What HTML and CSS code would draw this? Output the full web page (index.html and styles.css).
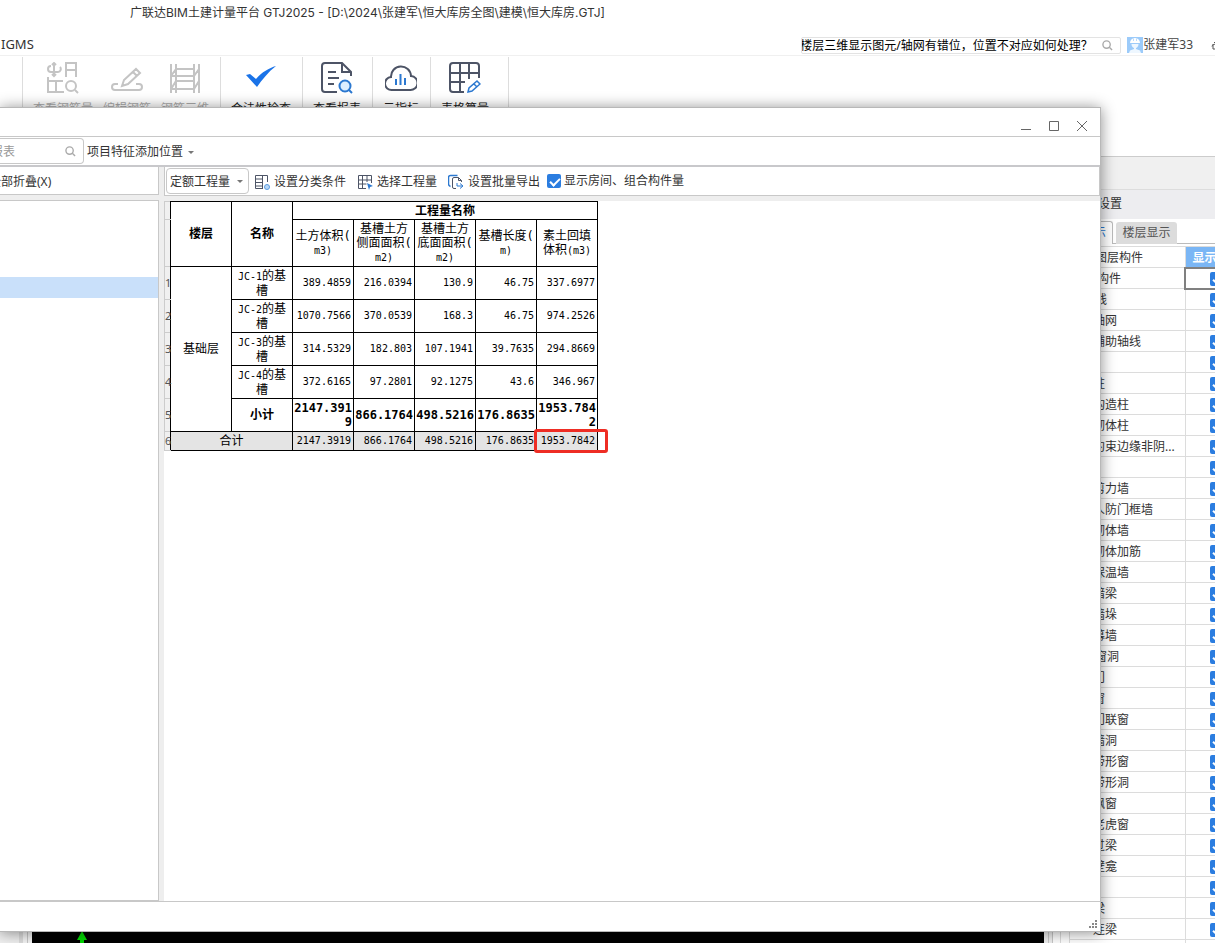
FILE: index.html
```html
<!DOCTYPE html>
<html lang="zh-CN">
<head>
<meta charset="utf-8">
<title>广联达BIM土建计量平台 GTJ2025</title>
<link rel="stylesheet" href="styles.css">
</head>
<body>
<div class="app">
  <header class="titlebar">广联达BIM土建计量平台 GTJ2025 - [D:\2024\张建军\恒大库房全图\建模\恒大库房.GTJ]</header>
  <nav class="menubar">
    <a class="menu-link" href="#">IGMS</a>
    <div class="help-search">
      <input class="help-input" type="text" aria-label="帮助搜索" value="楼层三维显示图元/轴网有错位，位置不对应如何处理？">
      <svg class="glass" viewBox="0 0 12 12"><circle cx="5" cy="5" r="4"/><path d="M8 8l3 3"/></svg>
    </div>
    <button class="user" type="button">
      <svg class="avatar" viewBox="0 0 16 16"><rect width="16" height="16" fill="#9ccbfa"/><path d="M3 6a5 5 0 0 1 10 0z" fill="#fff"/><path d="M4.500 7h7c0 2-1 3.500-2.500 4v1l4 1.500 1 2.500H2l1-2.500 4-1.500v-1C5.500 10.500 4.500 9 4.500 7z" fill="#eef7ff"/><path d="M6.500 1.500v2.500M9.500 1.500v2.500" stroke="#9ccbfa" stroke-width=".7"/></svg>张建军33
    </button>
    <svg class="tail-icon" viewBox="0 0 10 12"><path d="M5 1v2M3 3.500h5M1 7.500c0-3 7-3 7 0M2 5v5h6" /></svg>
  </nav>
  <div class="ribbon">
    <div class="group group-first"><button class="tool" type="button"><svg class="tool-icon" viewBox="0 0 32 32"></svg>量</button></div>
    <div class="group">
      <button class="tool" type="button" disabled><svg class="tool-icon" viewBox="0 0 32 32"><path d="M7 1v13M5 3l2-2 2 2M5 12l2 2 2-2M4 4a3 3 0 0 0 0 6h7a3 3 0 0 0 2-5M19 15V1h10v14M19 8h10M1 15v15h16M1 19h15M9 19v11"/><circle cx="24" cy="24" r="5"/><path d="M28 28l3 3"/></svg>查看钢筋量</button>
      <button class="tool" type="button" disabled><svg class="tool-icon" viewBox="0 0 32 32"><path d="M11 24l2-6L25 7l4 4-12 11zM22 10l4 4M7 22H4a3 3 0 0 0 0 6h24a3 3 0 0 0 0-6h-3"/></svg>编辑钢筋</button>
      <button class="tool" type="button" disabled><svg class="tool-icon" viewBox="0 0 32 32"><path d="M2 2v29M7 2v29M25 2v29M30 2v29M7 7h18M3 14h22M7 19h18M3 27h22M2 14l5-7M25 14l5-7M2 27l5-8M25 27l5-8"/></svg>钢筋三维</button>
    </div>
    <div class="group">
      <button class="tool" type="button"><svg class="tool-icon" viewBox="0 0 32 32"><path d="M1 13l4-1 6 5C17 10 24 6 31 4 23 10 17 18 12 25z" fill="#1a73e8" stroke="none"/></svg>合法性检查</button>
    </div>
    <div class="group">
      <button class="tool" type="button"><svg class="tool-icon" viewBox="0 0 32 32"><path d="M16 30H4a3 3 0 0 1-3-3V4a3 3 0 0 1 3-3h17l9 9v4M21 1v9h9M7 10h8M7 16h11M7 22h6"/><circle cx="24" cy="24" r="5.500" fill="#dceeff" stroke="#2b78d0"/><path d="M28 28l3 3" stroke="#2b78d0"/></svg>查看报表</button>
    </div>
    <div class="group">
      <button class="tool" type="button"><svg class="tool-icon" viewBox="0 0 32 32"><path d="M7 28a6.500 6.500 0 0 1-1-13A10 10 0 0 1 26 14a7 7 0 0 1-1 14z"/><path d="M11 17v6M15.500 12v11M20 16v7" stroke="#2b78d0"/></svg>云指标</button>
    </div>
    <div class="group group-last">
      <button class="tool" type="button"><svg class="tool-icon" viewBox="0 0 32 32"><path d="M15 30H4a3 3 0 0 1-3-3V4a3 3 0 0 1 3-3h23a3 3 0 0 1 3 3v12M1 11h29M1 20h15M11 1v29M20 1v16"/><path d="M19 30l1-4 8-7 3 3-8 7zM25 22l3 3" stroke="#2b78d0" stroke-width="1.500"/></svg>表格算量</button>
    </div>
  </div>
  <div class="workspace">
    <div class="dock"></div>
    <div class="canvas"><svg class="axis" viewBox="0 0 12 12"><path d="M6 0l5 9H8v3H4V9H1z" fill="#00d800"/></svg></div>
    <div class="dock-right"></div>
    <aside class="panel">
      <div class="panel-strip"></div>
      <h2 class="panel-title">显示设置</h2>
      <div class="tabs"><button class="tab tab-active" type="button">图元显示</button><button class="tab" type="button">楼层显示</button></div>
      <table class="layers">
        <thead><tr><th class="layer-name">图层构件</th><th class="layer-show">显示</th></tr></thead>
        <tbody>
          <tr><td class="l0">所有构件</td><td class="focused"><input class="check" type="checkbox" aria-label="所有构件" checked></td></tr>
          <tr><td class="l1">轴线</td><td><input class="check" type="checkbox" aria-label="轴线" checked></td></tr>
          <tr><td>轴网</td><td><input class="check" type="checkbox" aria-label="轴网" checked></td></tr>
          <tr><td>辅助轴线</td><td><input class="check" type="checkbox" aria-label="辅助轴线" checked></td></tr>
          <tr><td class="l1">柱</td><td><input class="check" type="checkbox" aria-label="柱" checked></td></tr>
          <tr><td>柱</td><td><input class="check" type="checkbox" aria-label="柱构件" checked></td></tr>
          <tr><td>构造柱</td><td><input class="check" type="checkbox" aria-label="构造柱" checked></td></tr>
          <tr><td>砌体柱</td><td><input class="check" type="checkbox" aria-label="砌体柱" checked></td></tr>
          <tr><td>约束边缘非阴...</td><td><input class="check" type="checkbox" aria-label="约束边缘非阴影区" checked></td></tr>
          <tr><td class="l1">墙</td><td><input class="check" type="checkbox" aria-label="墙" checked></td></tr>
          <tr><td>剪力墙</td><td><input class="check" type="checkbox" aria-label="剪力墙" checked></td></tr>
          <tr><td>人防门框墙</td><td><input class="check" type="checkbox" aria-label="人防门框墙" checked></td></tr>
          <tr><td>砌体墙</td><td><input class="check" type="checkbox" aria-label="砌体墙" checked></td></tr>
          <tr><td>砌体加筋</td><td><input class="check" type="checkbox" aria-label="砌体加筋" checked></td></tr>
          <tr><td>保温墙</td><td><input class="check" type="checkbox" aria-label="保温墙" checked></td></tr>
          <tr><td>暗梁</td><td><input class="check" type="checkbox" aria-label="暗梁" checked></td></tr>
          <tr><td>墙垛</td><td><input class="check" type="checkbox" aria-label="墙垛" checked></td></tr>
          <tr><td>幕墙</td><td><input class="check" type="checkbox" aria-label="幕墙" checked></td></tr>
          <tr><td class="l1">门窗洞</td><td><input class="check" type="checkbox" aria-label="门窗洞" checked></td></tr>
          <tr><td>门</td><td><input class="check" type="checkbox" aria-label="门" checked></td></tr>
          <tr><td>窗</td><td><input class="check" type="checkbox" aria-label="窗" checked></td></tr>
          <tr><td>门联窗</td><td><input class="check" type="checkbox" aria-label="门联窗" checked></td></tr>
          <tr><td>墙洞</td><td><input class="check" type="checkbox" aria-label="墙洞" checked></td></tr>
          <tr><td>带形窗</td><td><input class="check" type="checkbox" aria-label="带形窗" checked></td></tr>
          <tr><td>带形洞</td><td><input class="check" type="checkbox" aria-label="带形洞" checked></td></tr>
          <tr><td>飘窗</td><td><input class="check" type="checkbox" aria-label="飘窗" checked></td></tr>
          <tr><td>老虎窗</td><td><input class="check" type="checkbox" aria-label="老虎窗" checked></td></tr>
          <tr><td>过梁</td><td><input class="check" type="checkbox" aria-label="过梁" checked></td></tr>
          <tr><td>壁龛</td><td><input class="check" type="checkbox" aria-label="壁龛" checked></td></tr>
          <tr><td class="l1">梁</td><td><input class="check" type="checkbox" aria-label="梁" checked></td></tr>
          <tr><td>梁</td><td><input class="check" type="checkbox" aria-label="梁构件" checked></td></tr>
          <tr><td>连梁</td><td><input class="check" type="checkbox" aria-label="连梁" checked></td></tr>
          <tr><td></td><td></td></tr>
        </tbody>
      </table>
    </aside>
  </div>
</div>

<section class="dialog" role="dialog" aria-label="查看报表">
  <div class="dialog-title">
    <button class="win-btn" type="button" aria-label="最小化"><svg viewBox="0 0 12 12"><path d="M1 9.500h10"/></svg></button>
    <button class="win-btn" type="button" aria-label="最大化"><svg viewBox="0 0 12 12"><path d="M1.500 1.500h9v9h-9z"/></svg></button>
    <button class="win-btn" type="button" aria-label="关闭"><svg viewBox="0 0 12 12"><path d="M1 1l10 10M11 1L1 11"/></svg></button>
  </div>
  <div class="dialog-bar">
    <div class="report-search">
      <input class="report-input" type="text" aria-label="搜索报表" placeholder="报表">
      <svg class="glass" viewBox="0 0 12 12"><circle cx="5" cy="5" r="4"/><path d="M8 8l3 3"/></svg>
    </div>
    <button class="drop-btn" type="button">项目特征添加位置<span class="caret"></span></button>
  </div>
  <div class="dialog-body">
    <div class="side">
      <button class="collapse" type="button"><span class="collapse-text">全部折叠(X)</span></button>
      <div class="tree"><div class="tree-selected"></div></div>
    </div>
    <div class="report">
      <div class="report-bar">
        <div class="select-wrap"><select class="quota" aria-label="工程量类型"><option>定额工程量</option></select><span class="caret caret-select"></span></div>
        <button class="action" type="button"><svg class="action-icon" viewBox="0 0 16 16"><path d="M9 14.500H1.500v-13h12V8M1.500 5h7M1.500 8.500h7M1.500 12h7M8.500 1.500v13"/><circle cx="13" cy="13" r="2.500" stroke="#5a9be0" fill="#b9d8f7"/></svg>设置分类条件</button>
        <button class="action" type="button"><svg class="action-icon" viewBox="0 0 16 16"><path d="M9 14.500H1.500v-13h13V9M1.500 6h13M1.500 10h8M5.500 1.500v13M10 1.500V8"/><path d="M10 9l6 3-3 1-1 3z" fill="#2b78d0" stroke="none"/></svg>选择工程量</button>
        <button class="action" type="button"><svg class="action-icon" viewBox="0 0 16 16"><path d="M2.500 12.500C1 12 .5 11 .5 10V3.500a2 2 0 0 1 2-2h7" stroke="#2b78d0" stroke-width="1.500"/><path d="M8 14.500H6a1.500 1.500 0 0 1-1.500-1.500V5A1.500 1.500 0 0 1 6 3.500h4.500l3 3V8M10.500 3.500v3h3"/><path d="M9 9v3h5M12 9.500l3 2.500-3 2.500" stroke="#2b78d0"/></svg>设置批量导出</button>
        <label class="show-rooms"><input class="check" type="checkbox" checked>显示房间、组合构件量</label>
      </div>
      <div class="sheet">
        <table class="quantities">
          <colgroup><col class="col-num"><col span="7" class="col-data"></colgroup>
          <tbody>
          <tr class="r-group"><th class="num"></th><th rowspan="2">楼层</th><th rowspan="2">名称</th><th colspan="5">工程量名称</th></tr>
          <tr class="r-head"><th class="num"></th><td>土方体积(<br><small>m3)</small></td><td>基槽土方<br>侧面面积(<br><small>m2)</small></td><td>基槽土方<br>底面面积(<br><small>m2)</small></td><td>基槽长度(<br><small>m)</small></td><td>素土回填<br>体积<small>(m3)</small></td></tr>
          <tr><th class="num">1</th><td rowspan="5">基础层</td><td><small>JC-1</small>的基<br>槽</td><td class="val">389.4859</td><td class="val">216.0394</td><td class="val">130.9</td><td class="val">46.75</td><td class="val">337.6977</td></tr>
          <tr><th class="num">2</th><td><small>JC-2</small>的基<br>槽</td><td class="val">1070.7566</td><td class="val">370.0539</td><td class="val">168.3</td><td class="val">46.75</td><td class="val">974.2526</td></tr>
          <tr><th class="num">3</th><td><small>JC-3</small>的基<br>槽</td><td class="val">314.5329</td><td class="val">182.803</td><td class="val">107.1941</td><td class="val">39.7635</td><td class="val">294.8669</td></tr>
          <tr><th class="num">4</th><td><small>JC-4</small>的基<br>槽</td><td class="val">372.6165</td><td class="val">97.2801</td><td class="val">92.1275</td><td class="val">43.6</td><td class="val">346.967</td></tr>
          <tr><th class="num">5</th><th>小计</th><td class="sub">2147.391<br>9</td><td class="sub">866.1764</td><td class="sub">498.5216</td><td class="sub">176.8635</td><td class="sub">1953.784<br>2</td></tr>
          <tr class="r-total"><th class="num">6</th><td colspan="2">合计</td><td class="val">2147.3919</td><td class="val">866.1764</td><td class="val">498.5216</td><td class="val">176.8635</td><td class="val marked">1953.7842<span class="mark"></span></td></tr>
          </tbody>
        </table>
      </div>
    </div>
  </div>
  <div class="dialog-foot">
    <svg class="grip" viewBox="0 0 9 9"><path d="M6 0h2v2H6zM3 3h2v2H3zM6 3h2v2H6zM0 6h2v2H0zM3 6h2v2H3zM6 6h2v2H6z"/></svg>
  </div>
</section>
</body>
</html>
```
FILE: styles.css
```css
* { box-sizing: border-box; }
body {
  margin: 0;
  height: 100vh;
  overflow: hidden;
  position: relative;
  background: #fff;
  color: #333;
  font: 12px/16px "Noto Sans", "Noto Sans CJK SC", sans-serif;
}
button, input, select { font: inherit; color: inherit; margin: 0; padding: 0; border: 0; background: none; }
svg { fill: none; flex: none; }

.app { height: 100%; display: flex; flex-direction: column; }
.titlebar { height: 30px; padding: 5px 0 0 130px; white-space: nowrap; flex: none; font-family: Inter, "Noto Sans CJK SC", sans-serif; }
.menubar { height: 26px; flex: none; display: flex; align-items: center; border-bottom: 1px solid #f0f0f0; overflow: hidden; }
.menu-link { color: #333; text-decoration: none; padding: 2px 1px 0; font-size: 13px; }
.help-search { width: 320px; height: 17px; margin: 5px 6px 0 auto; display: flex; align-items: center; gap: 6px; padding-right: 7px; border: 1px solid #e3e3e3; border-radius: 2px; overflow: hidden; }
.help-input { flex: 1; min-width: 0; height: 16px; padding-top: 1px; text-indent: -2px; color: #000; }
.glass { width: 11px; height: 11px; stroke: #aaa; stroke-width: 1.5; }
.user { display: flex; align-items: center; margin-top: 5px; white-space: nowrap; color: #444; }
.avatar { width: 16px; height: 16px; }
.tail-icon { width: 10px; height: 12px; margin: 4px -6px 0 18px; stroke: #555; }

.ribbon { height: 101px; flex: none; display: flex; align-items: flex-start; padding-top: 1px; border-bottom: 1px solid #ccc; }
.group { height: 80px; display: flex; gap: 10px; padding: 5px 11px 5px 10px; border-right: 1px solid #ddd; }
.group-first { width: 23px; justify-content: flex-end; padding-right: 12px; }
.group-last { padding-right: 19px; }
.tool { display: flex; flex-direction: column; align-items: center; gap: 7px; align-self: flex-start; white-space: nowrap; color: #222; }
.tool:disabled { color: #aaa; }
.tool-icon { width: 32px; height: 32px; stroke: #4d5466; stroke-width: 2; }
.tool:disabled .tool-icon { stroke: #c4c4c4; }

.workspace { flex: 1; min-height: 0; display: flex; }
.dock { width: 32px; background: linear-gradient(to right, #f0f0f0 19px, #dcdcdc 19px 23px, #f4f4f4 23px 27px, #c8c8c8 27px 28px, #f4f4f4 28px); }
.canvas { flex: 1; background: #000; position: relative; }
.axis { position: absolute; left: 44px; bottom: 0; width: 12px; height: 12px; }
.dock-right { width: 26px; background: linear-gradient(to right, #f0f0f0 4px, #c8c8c8 4px 5px, #f0f0f0 5px 8px, #c8c8c8 8px 9px, #fff 9px 16px, #dcdcdc 16px 17px, #fff 17px 25px, #dcdcdc 25px); }
.panel { width: 145px; flex: none; overflow: hidden; background: #fff; }
.panel-strip { height: 33px; background: #f0f0f0; border-bottom: 1px solid #ddd; }
.panel-title { margin: 0; height: 29px; padding: 6px 0 0 4px; font: inherit; background: #ededf0; }
.tabs { height: 25px; padding-top: 2px; display: flex; gap: 3px; border-bottom: 1px solid #bbb; margin-bottom: 2px; }
.tab { width: 61px; height: 22px; margin-top: 1px; background: #dcdcdc; border-radius: 3px 3px 0 0; white-space: nowrap; color: #555; flex: none; }
.tab-active { width: 43px; height: 23px; margin-top: 0; background: #fff; color: #2b78d0; border: 1px solid #bbb; border-bottom: 0; display: flex; justify-content: flex-end; align-items: center; padding-right: 6px; }
.layers { width: 160px; table-layout: fixed; border-collapse: collapse; }
.layers th, .layers td { height: 21px; padding: 1px 0 0 23px; line-height: 16px; text-align: left; white-space: nowrap; font-weight: 400; border: 1px solid #dcdcdc; border-left: 0; }
.layers th.layer-name { width: 115px; padding-left: 25px; }
.layers .l0 { padding-left: 3px; }
.layers .l1 { padding-left: 13px; }
.layers td + td { padding-left: 24px; }
.layers th.layer-show { padding-left: 7px; background: #7ab6f5; color: #fff; font-weight: 700; }
.layers td.focused { outline: 2px solid #808080; outline-offset: -1px; }
.check { appearance: none; display: block; flex: none; width: 14px; height: 14px; background: #2b7de0; border-radius: 2px; }
.check::before { content: ""; display: block; width: 8px; height: 4px; margin: 4px 0 0 3px; border: solid #fff; border-width: 0 0 2px 2px; transform: rotate(-45deg); }

.dialog { position: absolute; left: 0; right: 114px; top: 107px; bottom: 11px; display: flex; flex-direction: column; background: #fff; border: 1px solid #b8b8b8; border-left: 0; box-shadow: 0 1px 14px rgba(0, 0, 0, .45); }
.dialog-title { height: 29px; flex: none; display: flex; justify-content: flex-end; align-items: center; gap: 16px; padding: 8px 12px 0 0; border-bottom: 1px solid #c8c8c8; }
.win-btn { width: 12px; height: 12px; }
.win-btn svg { display: block; width: 12px; height: 12px; stroke: #666; }
.dialog-bar { height: 30px; flex: none; display: flex; align-items: center; gap: 3px; border-bottom: 2px solid #c8c8cb; }
.report-search { width: 84px; height: 26px; display: flex; align-items: center; padding-right: 7px; border: 1px solid #c8c8c8; border-left: 0; border-radius: 0 4px 4px 0; }
.report-input { flex: 1; min-width: 0; padding-top: 2px; text-indent: -9px; }
.report-input::placeholder { color: #999; }
.drop-btn { display: flex; align-items: center; gap: 5px; padding-top: 2px; }
.caret { border: 3px solid transparent; border-top-color: #777; border-bottom: 0; }
.dialog-body { flex: 1; min-height: 0; display: flex; gap: 5px; background: #eee; }
.side { width: 159px; flex: none; display: flex; flex-direction: column; gap: 5px; }
.collapse { height: 28px; flex: none; background: #fff; border: 1px solid #c8c8c8; border-left: 0; border-top: 0; overflow: hidden; display: flex; align-items: center; padding-top: 2px; }
.collapse-text { margin-left: -11px; }
.tree { flex: 1; background: #fff; border: 1px solid #c8c8c8; border-left: 0; padding-top: 76px; }
.tree-selected { height: 21px; background: #c9e0fa; }
.report { flex: 1; min-width: 0; display: flex; flex-direction: column; gap: 5px; }
.report-bar { height: 29px; flex: none; background: #fff; border: 1px solid #c8c8c8; border-top: 0; display: flex; align-items: center; padding: 0 1px; white-space: nowrap; }
.select-wrap { position: relative; }
.quota { appearance: none; width: 83px; height: 26px; padding: 2px 0 0 3px; border: 1px solid #c8c8c8; border-radius: 4px; }
.caret-select { position: absolute; right: 6px; top: 12px; }
.action { display: flex; align-items: center; gap: 4px; margin-left: 5px; padding-top: 2px; }
.action + .action { margin-left: 11px; }
.action-icon { width: 16px; height: 16px; stroke: #4d5466; }
.show-rooms { display: flex; align-items: center; gap: 3px; margin-left: 7px; }
.sheet { flex: 1; background: #fff; }

.quantities { width: 433px; table-layout: fixed; border-collapse: collapse; color: #000; font: 12px/14px "DejaVu Sans Mono", "Noto Sans CJK SC", monospace; }
.col-num { width: 6px; }
.col-data { width: 61px; }
.quantities th, .quantities td { height: 33px; padding: 0; text-align: center; vertical-align: middle; border: 1px solid #000; white-space: nowrap; }
.quantities small { font-size: 10px; }
.quantities th.num { border-color: #ccc #000 #ccc #ccc; background: #f0f0f0; font: 11px/14px "Noto Sans", sans-serif; color: #555; text-align: left; }
.quantities .r-group th { height: 18px; }
.quantities .r-head td { height: 47px; }
.quantities .r-total td, .quantities .r-total th { height: 19px; }
.quantities .r-total td { background: #e4e4e4; }
.quantities td.val { font-size: 10px; text-align: right; padding-right: 2px; }
.quantities td.sub { font-weight: 700; text-align: right; padding-right: 1px; }
.quantities .marked { position: relative; }
.mark { position: absolute; left: -3px; right: -11px; top: -3px; bottom: -3px; border: 3px solid #ee2d24; border-radius: 3px; }
.dialog-foot { height: 30px; flex: none; border-top: 1px solid #c8c8c8; display: flex; justify-content: flex-end; align-items: flex-end; padding: 2px; }
.grip { width: 9px; height: 9px; fill: #888; }
```
